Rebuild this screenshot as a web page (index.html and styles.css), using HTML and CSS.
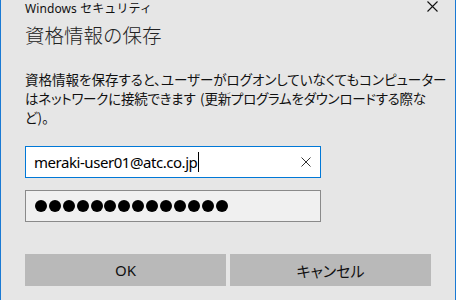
FILE: index.html
```html
<!DOCTYPE html>
<html lang="ja">
<head>
<meta charset="utf-8">
<title>Windows セキュリティ</title>
<link rel="stylesheet" href="styles.css">
</head>
<body>
<div class="window">
  <div class="titlebar">
    <span class="title">Windows セキュリティ</span>
    <svg class="close" width="11" height="11" viewBox="0 0 11 11"><path d="M0.5 0.5 L10.5 10.5 M10.5 0.5 L0.5 10.5" stroke="#111" stroke-width="1.1" fill="none"/></svg>
  </div>
  <h1 class="heading">資格情報の保存</h1>
  <p class="desc">資格情報を保存すると、ユーザーがログオンしていなくてもコンピューター<br><span class="tight">はネットワークに接続できます (更新プログラムをダウンロードする際な</span><br>ど)。</p>
  <div class="field field-focus">
    <span class="value">meraki-user01@atc.co.jp</span><span class="caret"></span>
    <svg class="clear" width="10" height="10" viewBox="0 0 10 10"><path d="M0.5 0.5 L9.5 9.5 M9.5 0.5 L0.5 9.5" stroke="#333" stroke-width="1" fill="none"/></svg>
  </div>
  <div class="field field-pwd">
    <span class="dot"></span><span class="dot"></span><span class="dot"></span><span class="dot"></span><span class="dot"></span><span class="dot"></span><span class="dot"></span><span class="dot"></span><span class="dot"></span><span class="dot"></span><span class="dot"></span><span class="dot"></span><span class="dot"></span><span class="dot"></span>
  </div>
  <div class="buttons">
    <button class="btn">OK</button>
    <button class="btn">キャンセル</button>
  </div>
</div>
</body>
</html>
```
FILE: styles.css
```css
html, body {
  margin: 0;
  padding: 0;
  background: #e6e6e6;
}
.window {
  box-sizing: border-box;
  width: 456px;
  height: 300px;
  background: #e6e6e6;
  border-left: 1px solid #1a7ad4;
  border-right: 1px solid #1a7ad4;
  padding: 0 24px 0 24px;
  display: flex;
  flex-direction: column;
  color: #000;
  font-family: "Noto Sans", "Noto Sans CJK JP", sans-serif;
}
.titlebar {
  box-sizing: border-box;
  height: 20px;
  display: flex;
  justify-content: space-between;
  align-items: flex-start;
  margin-right: -7px;
}
.title {
  padding-top: 1px;
  font-size: 12px;
  line-height: 15px;
  color: #111;
  letter-spacing: 0.1px;
}
.close {
  margin-top: 0.5px;
}
.heading {
  margin: 2px 0 0 0;
  font-family: "Noto Sans CJK JP", sans-serif;
  font-weight: 300;
  font-size: 19.5px;
  line-height: 26px;
  color: #222;
}
.desc {
  margin: 22px 0 0 0;
  font-family: "Noto Sans CJK JP", sans-serif;
  font-feature-settings: "palt";
  font-size: 13.5px;
  line-height: 19px;
  color: #111;
  white-space: nowrap;
}
.tight {
  letter-spacing: -0.25px;
  word-spacing: 2px;
}
.field {
  box-sizing: border-box;
  width: 296px;
  height: 32px;
  display: flex;
  align-items: center;
}
.field-focus {
  margin-top: 19px;
  background: #fff;
  border: 1px solid #0078d7;
  padding: 0 9px 0 8px;
}
.value {
  font-family: "Noto Sans", sans-serif;
  font-size: 15px;
  letter-spacing: -0.45px;
  color: #000;
}
.caret {
  width: 1px;
  height: 20px;
  background: #000;
  margin-left: 1px;
}
.clear {
  margin-left: auto;
}
.field-pwd {
  margin-top: 12px;
  background: #f0f0f0;
  border: 1px solid #8a8a8a;
  padding: 0 0 0 9px;
  gap: 1.9px;
}
.dot {
  width: 12px;
  height: 12px;
  border-radius: 50%;
  background: #000;
}
.buttons {
  margin-top: 32px;
  display: flex;
  gap: 4px;
}
.btn {
  width: 201px;
  height: 32px;
  border: none;
  background: #b9b9b9;
  font-family: "Noto Sans", "Noto Sans CJK JP", sans-serif;
  font-feature-settings: "palt";
  font-size: 15px;
  color: #111;
  padding: 0;
}
```
